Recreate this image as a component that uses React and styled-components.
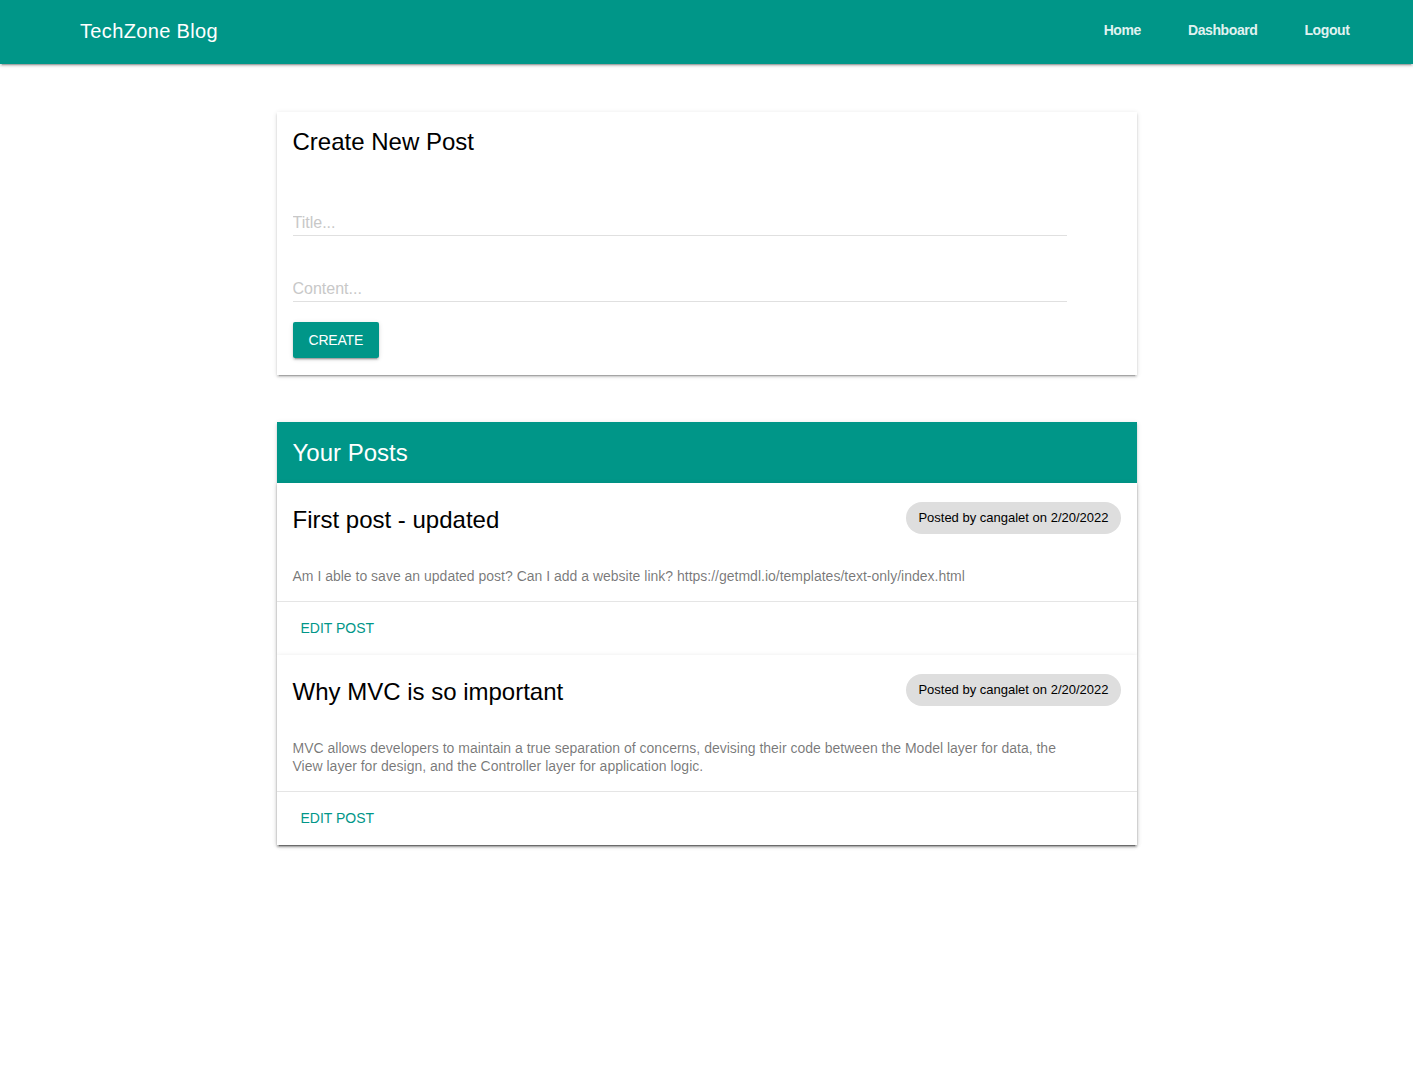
import React from 'react'
import styled, { createGlobalStyle } from 'styled-components';

const posts = [
    {
        id: 1,
        title: "First post - updated",
        author: "cangalet",
        date: "2/20/2022",
        content: "Am I able to save an updated post? Can I add a website link? https://getmdl.io/templates/text-only/index.html",
    },
    {
        id: 2,
        title: "Why MVC is so important",
        author: "cangalet",
        date: "2/20/2022",
        content: "MVC allows developers to maintain a true separation of concerns, devising their code between the Model layer for data, the View layer for design, and the Controller layer for application logic.",
    },
]

const App = () => {
  return (
      <div>
          <GlobalStyle />
          <Header>
              <Brand>TechZone Blog</Brand>
              <Nav>
                  <NavLink>Home</NavLink>
                  <NavLink>Dashboard</NavLink>
                  <NavLink>Logout</NavLink>
              </Nav>
          </Header>
          <Main>
              <Card>
                  <CardTitle>Create New Post</CardTitle>
                  <Form>
                      <Field>
                          <Input placeholder="Title..." />
                      </Field>
                      <Field>
                          <Input placeholder="Content..." />
                      </Field>
                      <RaisedButton type="button">Create</RaisedButton>
                  </Form>
              </Card>
              <Card>
                  <ListHeader>Your Posts</ListHeader>
                  {posts.map((post) => (
                      <PostCard key={post.id}>
                          <PostHead>
                              <PostTitle>{post.title}</PostTitle>
                              <Chip>Posted by {post.author} on {post.date}</Chip>
                          </PostHead>
                          <PostText>{post.content}</PostText>
                          <Actions>
                              <FlatButton type="button">Edit Post</FlatButton>
                          </Actions>
                      </PostCard>
                  ))}
              </Card>
          </Main>
      </div>
  );
}

export default App

const GlobalStyle = createGlobalStyle`
    body {
        margin: 0;
        background: #fff;
        font-family: "Liberation Sans", Arial, Helvetica, sans-serif;
    }
`;
const Header = styled.header`
    height: 64px;
    display: flex;
    align-items: center;
    justify-content: space-between;
    padding: 0 40px 0 80px;
    background: #009688;
    color: #fff;
    box-shadow: 0 2px 2px 0 rgba(0,0,0,.14), 0 3px 1px -2px rgba(0,0,0,.2), 0 1px 5px 0 rgba(0,0,0,.12);
`;
const Brand = styled.span`
    font-size: 20px;
    letter-spacing: 0.35px;
    margin-top: -1px;
`;
const Nav = styled.nav`
    display: flex;
    align-items: center;
`;
const NavLink = styled.a`
    padding: 0 23.5px;
    font-size: 14px;
    font-weight: 700;
    letter-spacing: -0.4px;
    color: rgba(255,255,255,.9);
    margin-top: -4px;
    cursor: pointer;
`;
const Main = styled.main`
    width: 860px;
    margin: 48px auto;
    display: flex;
    flex-direction: column;
    gap: 47px;
`;
const Card = styled.section`
    background: #fff;
    box-shadow: 0 2px 2px 0 rgba(0,0,0,.14), 0 3px 1px -2px rgba(0,0,0,.2), 0 1px 5px 0 rgba(0,0,0,.12);
`;
const CardTitle = styled.h2`
    margin: 0;
    padding: 16px 16px 34px;
    font-size: 24px;
    font-weight: 400;
    line-height: 28px;
    color: #000;
`;
const Form = styled.form`
    padding: 0 16px 17px;
    display: flex;
    flex-direction: column;
    align-items: flex-start;
`;
const Field = styled.div`
    width: 774px;
    padding: 20px 0;
`;
const Input = styled.input`
    display: block;
    width: 100%;
    box-sizing: border-box;
    border: none;
    border-bottom: 1px solid rgba(0,0,0,.12);
    padding: 3px 0;
    font-size: 16px;
    line-height: 19px;
    font-family: inherit;
    outline: none;
    &::placeholder {
        color: #c8c8c8;
    }
`;
const RaisedButton = styled.button`
    height: 36px;
    padding: 0 16px;
    border: none;
    border-radius: 2px;
    background: #009688;
    color: #fff;
    font-family: inherit;
    font-size: 14px;
    text-transform: uppercase;
    letter-spacing: -0.2px;
    box-shadow: 0 2px 2px 0 rgba(0,0,0,.14), 0 3px 1px -2px rgba(0,0,0,.2), 0 1px 5px 0 rgba(0,0,0,.12);
    cursor: pointer;
`;
const ListHeader = styled.h2`
    margin: 0;
    height: 61px;
    display: flex;
    align-items: center;
    padding: 0 16px;
    background: #009688;
    color: #fff;
    font-size: 24px;
    font-weight: 400;
`;
const PostCard = styled.article`
    background: #fff;
    box-shadow: 0 2px 2px 0 rgba(0,0,0,.14), 0 3px 1px -2px rgba(0,0,0,.2), 0 1px 5px 0 rgba(0,0,0,.12);
`;
const PostHead = styled.div`
    display: flex;
    align-items: center;
    justify-content: space-between;
    padding: 19px 16px 13px;
`;
const PostTitle = styled.h3`
    margin: 0;
    font-size: 24px;
    font-weight: 400;
    line-height: 36px;
    color: #000;
`;
const Chip = styled.span`
    height: 32px;
    line-height: 32px;
    padding: 0 12px;
    border-radius: 16px;
    background: #dedede;
    color: #000;
    font-size: 13px;
    margin-top: -5px;
`;
const PostText = styled.p`
    margin: 0;
    width: 772px;
    padding: 16px;
    font-size: 14px;
    line-height: 18px;
    color: rgba(0,0,0,.54);
`;
const Actions = styled.div`
    border-top: 1px solid rgba(0,0,0,.1);
    padding: 8px 8px 9px;
`;
const FlatButton = styled.button`
    height: 36px;
    padding: 0 16px;
    border: none;
    background: transparent;
    color: #009688;
    font-family: inherit;
    font-size: 14px;
    text-transform: uppercase;
    cursor: pointer;
`;
